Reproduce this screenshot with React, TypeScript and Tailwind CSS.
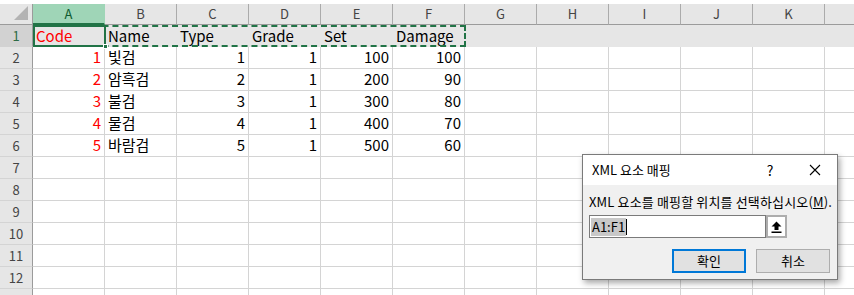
import React from 'react';

const font = { fontFamily: '"Noto Sans CJK KR", "Open Sans", sans-serif' };
const cols = ['A', 'B', 'C', 'D', 'E', 'F', 'G', 'H', 'I', 'J', 'K', ''];

type Cell = { v: string; right?: boolean; red?: boolean };

const data: Cell[][] = [
  [{ v: 'Code', red: true }, { v: 'Name' }, { v: 'Type' }, { v: 'Grade' }, { v: 'Set' }, { v: 'Damage' }],
  [{ v: '1', right: true, red: true }, { v: '빛검' }, { v: '1', right: true }, { v: '1', right: true }, { v: '100', right: true }, { v: '100', right: true }],
  [{ v: '2', right: true, red: true }, { v: '암흑검' }, { v: '2', right: true }, { v: '1', right: true }, { v: '200', right: true }, { v: '90', right: true }],
  [{ v: '3', right: true, red: true }, { v: '불검' }, { v: '3', right: true }, { v: '1', right: true }, { v: '300', right: true }, { v: '80', right: true }],
  [{ v: '4', right: true, red: true }, { v: '물검' }, { v: '4', right: true }, { v: '1', right: true }, { v: '400', right: true }, { v: '70', right: true }],
  [{ v: '5', right: true, red: true }, { v: '바람검' }, { v: '5', right: true }, { v: '1', right: true }, { v: '500', right: true }, { v: '60', right: true }],
];

function UploadIcon() {
  return (
    <svg width="11" height="12" viewBox="0 0 11 12">
      <path d="M5.5 0.5 L10.5 5.5 L7.5 5.5 L7.5 9 L3.5 9 L3.5 5.5 L0.5 5.5 Z" fill="#000" />
      <rect x="0.5" y="10.5" width="10" height="1.5" fill="#000" />
    </svg>
  );
}

function Dialog() {
  return (
    <div
      className="absolute left-[582px] top-[154px] w-[256px] h-[126px] border border-[#7a7a7a] bg-[#f0f0f0] shadow-[2px_3px_6px_rgba(0,0,0,0.35)] flex flex-col"
      style={{ fontFamily: '"Noto Sans CJK KR", "Open Sans", sans-serif' }}
    >
      <div className="h-[30px] bg-white flex items-center pl-[9px] text-[13px] text-black">
        <span className="flex-1">XML 요소 매핑</span>
        <span className="w-[14px] text-center mr-[32px] text-[14px]">?</span>
        <svg width="12" height="12" viewBox="0 0 12 12" className="mr-[16px]">
          <path d="M1 1 L11 11 M11 1 L1 11" stroke="#000" strokeWidth="1.1" />
        </svg>
      </div>
      <div className="flex-1 flex flex-col px-[6px] pt-[8px]">
        <div className="text-[13px] leading-[18px] text-black whitespace-nowrap tracking-[0.15px]">
          XML 요소를 매핑할 위치를 선택하십시오(<span className="underline">M</span>).
        </div>
        <div className="mt-[4px] flex h-[23px] w-[198px]">
          <div className="flex-1 border border-[#7a7a7a] bg-white flex items-center pl-[1px]">
            <span className="bg-[#c8c8c8] text-[13px] leading-[18px] text-black px-[1px]">A1:F1</span>
            <span className="w-[1px] h-[16px] bg-black" />
          </div>
          <div className="w-[21px] border-2 border-[#adadad] bg-white flex items-center justify-center">
            <UploadIcon />
          </div>
        </div>
        <div className="mt-[11px] flex justify-end gap-[10px] mr-[1px]">
          <button className="w-[74px] h-[24px] border-2 border-[#0078d7] bg-[#e1e1e1] text-[13px] text-black flex items-center justify-center">
            확인
          </button>
          <button className="w-[74px] h-[24px] border border-[#adadad] bg-[#e1e1e1] text-[13px] text-black flex items-center justify-center">
            취소
          </button>
        </div>
      </div>
    </div>
  );
}

export default function App() {
  const rows = Array.from({ length: 13 }, (_, i) => i + 1);
  return (
    <div className="relative w-[854px] h-[295px] overflow-hidden bg-white" style={font}>
      <div className="h-[4px] bg-white" />
      {/* column headers */}
      <div className="flex h-[21px]">
        <div className="w-[33px] shrink-0 bg-[#e6e6e6] border-r border-b border-[#9b9b9b] relative">
          <svg width="14" height="14" viewBox="0 0 14 14" className="absolute right-[4px] bottom-[4px]">
            <path d="M14 0 L14 14 L0 14 Z" fill="#b3b3b3" />
          </svg>
        </div>
        {cols.map((c, i) => (
          <div
            key={i}
            className={`${i === 11 ? 'w-[40px]' : 'w-[72px]'} shrink-0 flex items-center justify-center text-[13px] border-r ${
              i === 0
                ? 'bg-[#9fd5b7] text-[#0f5b31] border-[#9fd5b7] border-b-2 border-b-[#217346]'
                : 'bg-[#e6e6e6] text-[#444] border-[#ababab] border-b border-b-[#9b9b9b]'
            }`}
          >
            {c}
          </div>
        ))}
      </div>
      {rows.map((r) => {
        const sel = r === 1;
        const cells = data[r - 1];
        return (
          <div key={r} className="flex h-[22px]">
            <div
              className={`w-[33px] shrink-0 border-r border-b border-r-[#9b9b9b] flex items-center justify-center text-[13px] ${
                sel ? 'bg-[#d2d2d2] text-[#2e6b45] border-b-[#d2d2d2]' : 'bg-[#e6e6e6] text-[#444] border-b-[#d4d4d4]'
              }`}
            >
              {r < 13 ? r : ''}
            </div>
            {cols.map((_, i) => {
              const cell = cells ? cells[i] : undefined;
              return (
                <div
                  key={i}
                  className={`${i === 11 ? 'w-[40px]' : 'w-[72px]'} shrink-0 flex items-end px-[3px] pb-[1px] text-[15px] leading-[20px] whitespace-nowrap ${
                    sel ? 'bg-[#e6e6e6]' : 'border-r border-b border-[#d4d4d4]'
                  } ${cell?.right ? 'justify-end' : 'justify-start'} ${cell?.red ? 'text-[#ff0000]' : 'text-black'}`}
                >
                  {cell?.v}
                </div>
              );
            })}
          </div>
        );
      })}
      {/* copy range marching ants */}
      <div className="absolute left-[33px] top-[25px] w-[433px] h-[22px] border-2 border-dashed border-[#217346]" />
      {/* active cell */}
      <div className="absolute left-[33px] top-[25px] w-[73px] h-[22px] border-2 border-[#217346]" />
      <div className="absolute left-[103px] top-[44px] w-[5px] h-[5px] bg-[#217346] border border-white" />
      <Dialog />
    </div>
  );
}
